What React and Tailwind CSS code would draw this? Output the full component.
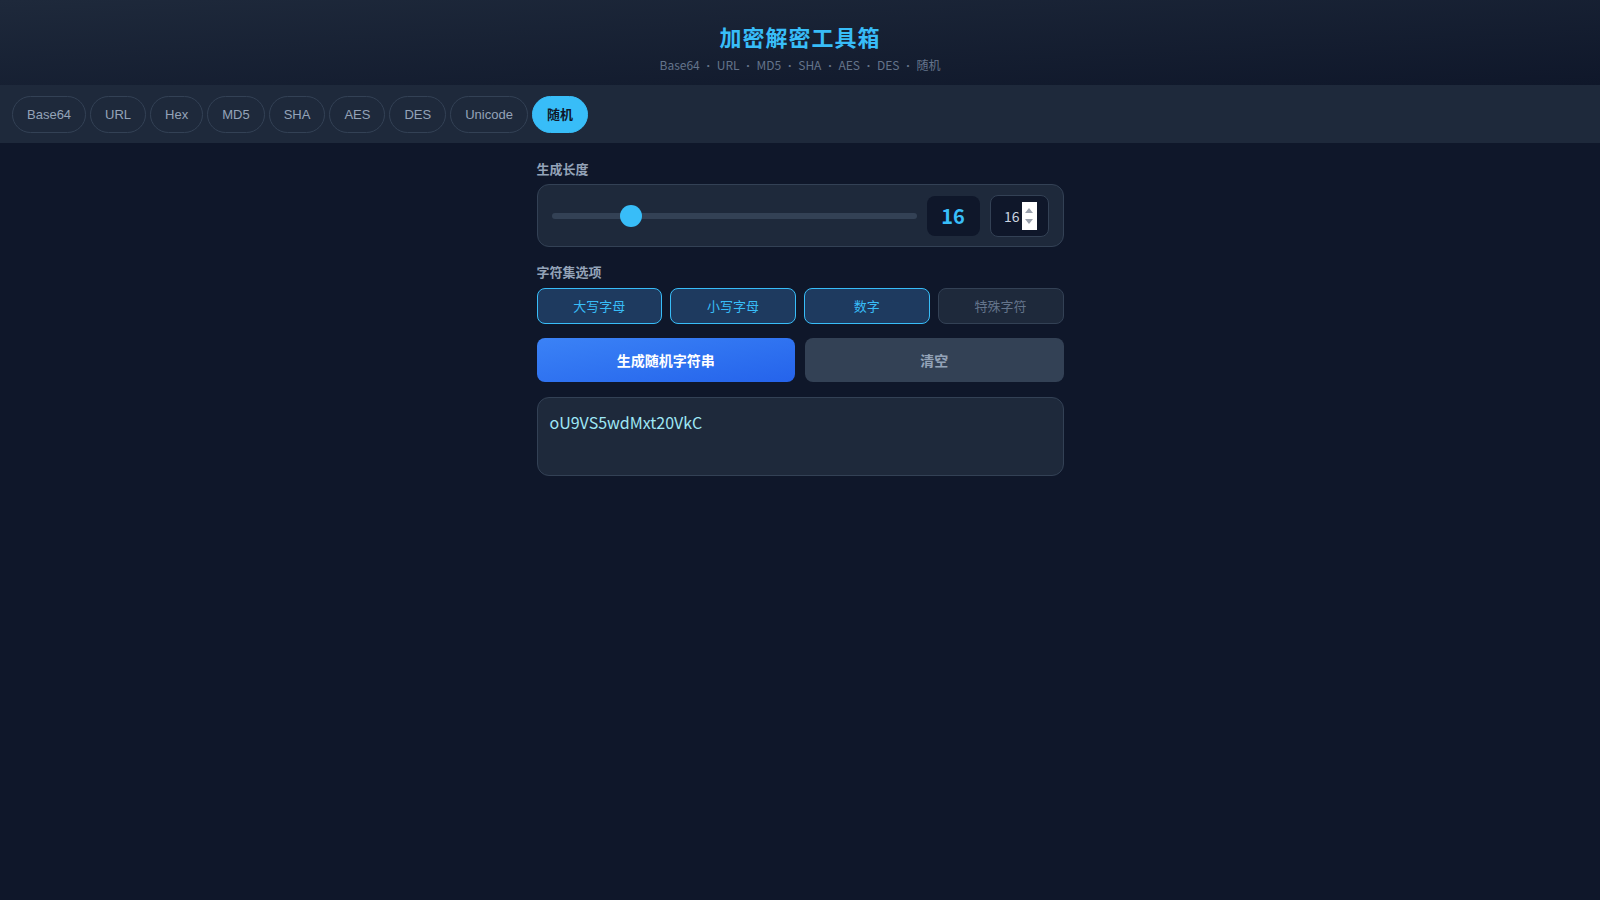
import { useState } from "react";

const tabs = ["Base64", "URL", "Hex", "MD5", "SHA", "AES", "DES", "Unicode", "随机"];
const subtitle = ["Base64", "URL", "MD5", "SHA", "AES", "DES", "随机"];

const charsets = [
  { label: "大写字母", on: true },
  { label: "小写字母", on: true },
  { label: "数字", on: true },
  { label: "特殊字符", on: false },
];

const MIN = 4;
const MAX = 64;

export default function App() {
  const [active] = useState("随机");
  const [length] = useState(16);
  const pct = (length - MIN) / (MAX - MIN);

  return (
    <div className="min-h-screen bg-[#0f172a] font-['Noto_Sans_CJK_SC',sans-serif]">
      {/* header */}
      <header className="h-[85px] bg-gradient-to-br from-[#1e293b] to-[#0f172a] pt-[20px] text-center">
        <h1 className="text-[22px] leading-8 font-bold tracking-[1px] text-[#38bdf8]">加密解密工具箱</h1>
        <p className="mt-[5px] text-xs leading-4 text-[#64748b]">
          {subtitle.map((s, i) => (
            <span key={s}>
              {i > 0 && <span className="mx-[3.5px] text-[10px]">•</span>}
              {s}
            </span>
          ))}
        </p>
      </header>

      {/* tab bar */}
      <nav className="flex gap-1 bg-[#1e293b] px-3 pt-[11px] pb-[10px] font-['Liberation_Sans','Noto_Sans_CJK_SC',sans-serif]">
        {tabs.map((t) =>
          t === active ? (
            <button
              key={t}
              className="h-[37px] rounded-full border border-[#38bdf8] bg-[#38bdf8] px-[14px] text-[13px] font-bold text-[#0f172a]"
            >
              {t}
            </button>
          ) : (
            <button
              key={t}
              className="h-[37px] rounded-full border border-[#334155] px-[14px] text-[13px] text-[#94a3b8]"
            >
              {t}
            </button>
          )
        )}
      </nav>

      {/* body */}
      <main className="flex justify-center pt-[17px]">
        <div className="w-[527px]">
          <div className="mb-[6px] text-[13px] leading-[18px] font-bold text-[#94a3b8]">生成长度</div>
          <div className="flex h-[63px] items-center gap-2.5 rounded-xl border border-[#334155] bg-[#1e293b] px-3.5">
            <div className="relative h-[6px] flex-1 rounded-full bg-[#334155]">
              <div
                className="absolute top-1/2 h-[22px] w-[22px] -translate-y-1/2 rounded-full bg-[#38bdf8]"
                style={{ left: `calc((100% - 22px) * ${pct})` }}
              />
            </div>
            <div className="flex h-[40px] w-[53px] items-center justify-center rounded-lg bg-[#0f172a] text-xl font-bold text-[#38bdf8]">
              {length}
            </div>
            <div className="flex h-[42px] w-[59px] items-center justify-end gap-[2px] rounded-lg border border-[#334155] bg-[#0f172a] pr-[11px] text-sm text-[#cbd5e1]">
              <span>{length}</span>
              <span className="flex h-[28px] w-[15px] flex-col items-center justify-center gap-[6px] bg-white">
                <svg width="8" height="5" viewBox="0 0 8 5">
                  <path d="M0 5 L4 0 L8 5 Z" fill="#9ca3af" />
                </svg>
                <svg width="8" height="5" viewBox="0 0 8 5">
                  <path d="M0 0 L4 5 L8 0 Z" fill="#9ca3af" />
                </svg>
              </span>
            </div>
          </div>

          <div className="mt-4 mb-[7px] text-[13px] leading-[18px] font-bold text-[#94a3b8]">字符集选项</div>
          <div className="grid grid-cols-4 gap-2">
            {charsets.map((c) => (
              <button
                key={c.label}
                className={
                  c.on
                    ? "h-[36px] rounded-lg border border-[#38bdf8] bg-[#1e3a5f] text-[13px] text-[#38bdf8]"
                    : "h-[36px] rounded-lg border border-[#334155] bg-[#1e293b] text-[13px] text-[#64748b]"
                }
              >
                {c.label}
              </button>
            ))}
          </div>

          <div className="mt-[14px] grid grid-cols-2 gap-2.5">
            <button className="h-[44px] rounded-lg bg-gradient-to-br from-[#3b82f6] to-[#2563eb] text-sm font-bold text-white">
              生成随机字符串
            </button>
            <button className="h-[44px] rounded-lg bg-[#334155] text-sm font-bold text-[#94a3b8]">清空</button>
          </div>

          <div className="mt-[15px] h-[79px] rounded-xl border border-[#334155] bg-[#1e293b] p-3 text-base leading-6 text-[#9ee7f5]">
            oU9VS5wdMxt20VkC
          </div>
        </div>
      </main>
    </div>
  );
}
